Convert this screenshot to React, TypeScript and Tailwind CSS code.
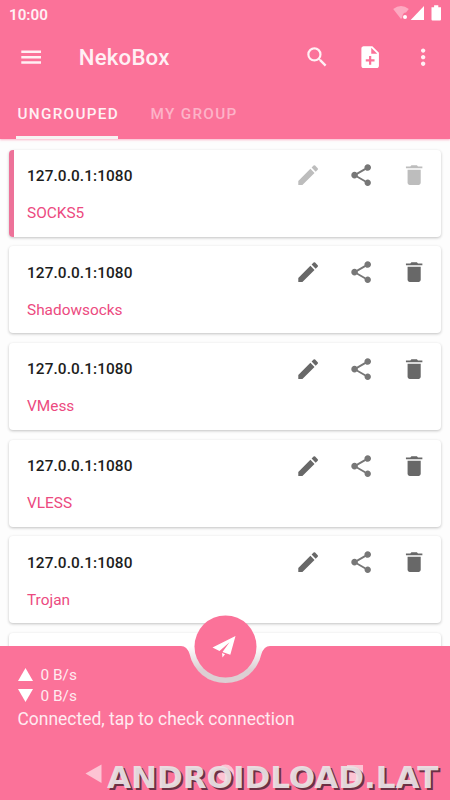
import React from "react";

const PATHS = {
  menu: "M3 18h18v-2.3H3V18zm0-4.85h18v-2.3H3v2.3zM3 6v2.3h18V6H3z",
  search:
    "M15.5 14h-.79l-.28-.27A6.471 6.471 0 0 0 16 9.5 6.5 6.5 0 1 0 9.5 16c1.61 0 3.09-.59 4.23-1.57l.27.28v.79l5 4.99L20.49 19l-4.99-5zm-6 0C7.01 14 5 11.99 5 9.5S7.01 5 9.5 5 14 7.01 14 9.5 11.99 14 9.5 14z",
  noteAdd:
    "M14 2H6c-1.1 0-1.99.9-1.99 2L4 20c0 1.1.89 2 1.99 2H18c1.1 0 2-.9 2-2V8l-6-6zm2 14h-3v3h-2v-3H8v-2h3v-3h2v3h3v2zm-3-7V3.5L18.5 9H13z",
  more: "M12 8c1.1 0 2-.9 2-2s-.9-2-2-2-2 .9-2 2 .9 2 2 2zm0 2c-1.1 0-2 .9-2 2s.9 2 2 2 2-.9 2-2-.9-2-2-2zm0 6c-1.1 0-2 .9-2 2s.9 2 2 2 2-.9 2-2-.9-2-2-2z",
  edit: "M3 17.25V21h3.75L17.81 9.94l-3.75-3.75L3 17.25zM20.71 7.04a.996.996 0 0 0 0-1.41l-2.34-2.34a.996.996 0 0 0-1.41 0l-1.83 1.83 3.75 3.75 1.83-1.83z",
  share:
    "M18 16.08c-.76 0-1.44.3-1.96.77L8.91 12.7c.05-.23.09-.46.09-.7s-.04-.47-.09-.7l7.05-4.11c.54.5 1.25.81 2.04.81 1.66 0 3-1.34 3-3s-1.34-3-3-3-3 1.34-3 3c0 .24.04.47.09.7L8.04 9.81C7.5 9.31 6.79 9 6 9c-1.66 0-3 1.34-3 3s1.34 3 3 3c.79 0 1.5-.31 2.04-.81l7.12 4.16c-.05.21-.08.43-.08.65 0 1.61 1.31 2.92 2.92 2.92s2.92-1.31 2.92-2.92-1.31-2.92-2.92-2.92z",
  trash:
    "M6 19c0 1.1.9 2 2 2h8c1.1 0 2-.9 2-2V7H6v12zM19.5 4H15.5l-1-1h-5l-1 1H4.500v1.600h15V4z",
};

function Icon({ name, className = "" }: { name: keyof typeof PATHS; className?: string }) {
  return (
    <svg viewBox="0 0 24 24" className={`size-[26.3px] shrink-0 ${className}`} fill="currentColor">
      <path d={PATHS[name]} />
    </svg>
  );
}

const PROFILES = ["SOCKS5", "Shadowsocks", "VMess", "VLESS", "Trojan"];

function ProfileCard({ type, selected }: { type: string; selected: boolean }) {
  const dim = selected ? "text-[#bdbdbd]" : "text-[#686868]";
  return (
    <div className="relative h-[87px] shrink-0 overflow-hidden rounded-[4px] bg-white pl-[18px] pr-[14px] pt-[12.6px] shadow-[0_1px_3px_rgba(0,0,0,0.24)]">
      {selected && <div className="absolute inset-y-0 left-0 w-[5px] bg-[#ed7299]" />}
      <div className="flex h-[27px] items-center">
        <span className="flex-1 pt-[2px] text-[15.4px] font-medium tracking-[0.08px] text-[#1d1d1d]">127.0.0.1:1080</span>
        <div className="flex gap-[26.7px]">
          <Icon name="edit" className={dim} />
          <Icon name="share" className="text-[#777]" />
          <Icon name="trash" className={dim} />
        </div>
      </div>
      <div className="mt-[14px] text-[15.4px] leading-5 text-[#ec4a80]">{type}</div>
    </div>
  );
}

function Header() {
  return (
    <header className="relative z-10 h-[139px] bg-[#fb7299] text-[#fff0f4] shadow-[0_1px_2px_rgba(251,114,153,0.5)]">
      <div className="flex h-[28px] items-center justify-between pl-[9px] pr-[6px]">
        <span className="pt-[2px] text-[15.2px] font-semibold">10:00</span>
        <svg width="52" height="20" viewBox="0 0 52 20" className="mt-[-2px]">
          <path d="M1.200 6Q9 0 16.800 6L14 9.500Q10.500 9.500 10.300 14.500L9 16Z" fill="#fda9c1" />
          <circle cx="13" cy="14" r="2" fill="#fff" />
          <path d="M18.700 17L32 3V17Z" fill="#fff" />
          <path d="M39.500 4.200h2.600V2.200h4.200V4.200H49v12.300q0 1-1 1h-7.500q-1 0-1-1Z" fill="#fff" />
        </svg>
      </div>
      <div className="flex h-[59px] items-center pl-[17.5px] pr-[13.5px]">
        <Icon name="menu" />
        <h1 className="flex-1 pl-[35px] pt-[1px] text-[22.2px] font-medium tracking-[0.2px]">NekoBox</h1>
        <div className="flex gap-[27px]">
          <Icon name="search" />
          <Icon name="noteAdd" className="text-white" />
          <Icon name="more" />
        </div>
      </div>
      <nav className="flex h-[52px] text-[15.3px] font-medium tracking-[1.3px]">
        <div className="flex w-[118px] flex-col items-start justify-between pt-[16px]">
          <span className="pl-[17.5px] leading-[22px]">UNGROUPED</span>
          <div className="ml-[15.5px] h-[3px] w-[102px] bg-[#f7f3f3]" />
        </div>
        <span className="pl-[32.5px] pt-[16px] leading-[22px] text-[#fdb3c8]">MY GROUP</span>
      </nav>
    </header>
  );
}

function BottomBar() {
  return (
    <footer className="absolute inset-x-0 bottom-0 h-[190px] text-[#ffeaf0]">
      <svg width="450" height="190" viewBox="0 0 450 190" className="absolute inset-0 overflow-visible">
        <defs>
          <linearGradient id="notch" gradientUnits="userSpaceOnUse" x1="0" y1="36" x2="0" y2="60">
            <stop offset="0" stopColor="#dccfd3" stopOpacity="0" />
            <stop offset="1" stopColor="#dccfd3" />
          </linearGradient>
        </defs>
        <circle cx="225.5" cy="36.5" r="37" fill="url(#notch)" />
        <path
          d="M0 36H181Q187 36 189.600 44A36.700 36.700 0 0 0 261.400 44Q264 36 270 36H450V190H0Z"
          fill="#fb7299"
        />
        <circle cx="225.5" cy="36.5" r="31" fill="#fb7299" />
        <g transform="translate(212.5 26)" fill="#fff">
          <path d="M23 0L0 11.500L7 14.900L17 6.200L10 16L17.800 18.800Z" />
          <path d="M9.500 17L12.500 18.200L10 21.500Z" />
        </g>
      </svg>
      <div className="relative flex flex-col pl-[17.5px] pt-[54px]">
        <div className="flex h-[21px] items-center gap-[8px] text-[15.4px]">
          <svg width="15" height="13" viewBox="0 0 15 13"><path d="M7.5 0L15 13H0Z" fill="#fff" /></svg>
          <span className="pt-[2px]">0 B/s</span>
        </div>
        <div className="flex h-[21px] items-center gap-[8px] text-[15.4px]">
          <svg width="15" height="13" viewBox="0 0 15 13"><path d="M0 0H15L7.5 13Z" fill="#fff" /></svg>
          <span className="pt-[2px]">0 B/s</span>
        </div>
        <span className="text-[17.45px] leading-[26px]">Connected, tap to check connection</span>
      </div>
      <svg width="300" height="24" viewBox="0 0 300 24" className="absolute left-[80px] top-[151px]">
        <path d="M5.5 12.5L21.5 3.5V22Z" fill="#fdc4d4" />
        <circle cx="145.5" cy="12" r="8.5" fill="#fdc4d4" />
        <rect x="267" y="4" width="16" height="16" fill="#fdc4d4" />
      </svg>
      <span className="absolute left-[107px] top-[147px] whitespace-nowrap font-['DejaVu_Sans',sans-serif] text-[31px] font-bold leading-[40px] text-[#e9e2e4]/95 [text-shadow:2px_2px_0_#6c3044]">
        ANDROIDLOAD.LAT
      </span>
    </footer>
  );
}

export default function App() {
  return (
    <div className="relative h-[800px] w-[450px] overflow-hidden bg-[#fdfdfd] font-[Roboto,sans-serif]">
      <Header />
      <main className="flex flex-col gap-[9.7px] px-[9px] pt-[10.5px]">
        {PROFILES.map((type, i) => (
          <ProfileCard key={type} type={type} selected={i === 0} />
        ))}
        <div className="h-[87px] shrink-0 rounded-[4px] bg-white shadow-[0_1px_3px_rgba(0,0,0,0.24)]" />
      </main>
      <BottomBar />
    </div>
  );
}
